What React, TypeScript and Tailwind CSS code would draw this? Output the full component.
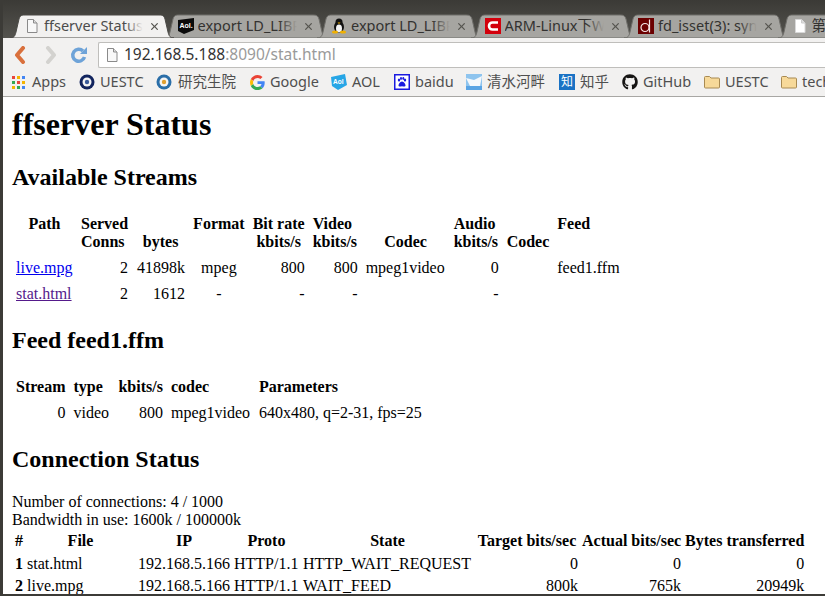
import React from "react";
import { FaGithub } from "react-icons/fa";
import { IoClose } from "react-icons/io5";

const uiFont = "font-['Noto_Sans','Noto_Sans_CJK_SC',sans-serif]";

function DocIcon({ active }: { active?: boolean }) {
  return (
    <svg width="16" height="16" viewBox="0 0 16 16" className="shrink-0">
      <path
        d="M3.5 1.5h6l3.5 3.5v9.5h-9.5z"
        fill={active ? "#f8f8f8" : "#fff"}
        stroke={active ? "#8a8a8a" : "#d8d8d8"}
      />
      <path d="M9.5 1.5v3.5h3.5" fill="#ddd" stroke={active ? "#8a8a8a" : "#ccc"} />
    </svg>
  );
}

function AolIcon() {
  return (
    <svg width="16" height="16" viewBox="0 0 16 16" className="shrink-0">
      <path d="M0 2l16-2v12l-10 4-6-3z" fill="#0b0b0b" />
      <text x="1.5" y="10" fontSize="7" fontWeight="700" fill="#fff" fontFamily="Liberation Sans">
        Aol.
      </text>
    </svg>
  );
}

function TuxIcon() {
  return (
    <svg width="16" height="16" viewBox="0 0 16 16" className="shrink-0">
      <ellipse cx="8" cy="9" rx="5" ry="6" fill="#111" />
      <circle cx="8" cy="4" r="3.5" fill="#111" />
      <ellipse cx="8" cy="10.5" rx="3" ry="4" fill="#f4f4f4" />
      <path d="M6.5 4.5h3l-1.5 1.5z" fill="#f0b000" />
      <ellipse cx="4" cy="14" rx="3" ry="1.6" fill="#f0b000" />
      <ellipse cx="12" cy="14" rx="3" ry="1.6" fill="#f0b000" />
    </svg>
  );
}

function RedCIcon() {
  return (
    <svg width="16" height="16" viewBox="0 0 16 16" className="shrink-0">
      <rect width="16" height="16" fill="#d3000c" />
      <path d="M13 4.5H7.5a3.5 3.5 0 0 0 0 7H13" fill="none" stroke="#fff" strokeWidth="2.6" />
    </svg>
  );
}

function DieIcon() {
  return (
    <svg width="16" height="16" viewBox="0 0 16 16" className="shrink-0">
      <rect width="16" height="16" fill="#6b0000" />
      <circle cx="7" cy="9.5" r="4" fill="none" stroke="#f5e6e6" strokeWidth="1.2" />
      <path d="M11.5 1.5v13" stroke="#f5e6e6" strokeWidth="1.2" />
    </svg>
  );
}

const tabs = [
  { title: "ffserver Status", icon: <DocIcon active />, active: true },
  { title: "export LD_LIBRARY", icon: <AolIcon /> },
  { title: "export LD_LIBRARY", icon: <TuxIcon /> },
  { title: "ARM-Linux下Wifi", icon: <RedCIcon /> },
  { title: "fd_isset(3): sync", icon: <DieIcon /> },
  { title: "第一章", icon: <DocIcon /> },
];

function Tab({ title, icon, active }: { title: string; icon: React.ReactNode; active?: boolean }) {
  return (
    <div className={`relative flex h-[24px] w-[153.5px] shrink-0 items-center pl-[7px] ${active ? "z-10" : ""}`}>
      <svg width="172" height="24" viewBox="0 0 172 24" className="absolute -left-[7px] top-0">
        <path
          d="M0 24c4 0 5-2 6-6l3-13c1-3 2-4 6-4h134c4 0 5 1 6 4l3 13c1 4 2 6 6 6z"
          fill={active ? "#f2f1f0" : "#a6a5a1"}
          stroke={active ? "#4a4945" : "#6f6e6a"}
          strokeWidth="1"
        />
      </svg>
      <div className="relative">{icon}</div>
      <div className={`relative mb-[2px] ml-[4px] w-[99px] overflow-hidden whitespace-nowrap text-[14.5px] leading-[18px] ${active ? "text-[#4c4c4c]" : "text-[#333230]"}`}>
        {title}
        <div className={`absolute inset-y-0 right-0 w-[18px] bg-gradient-to-r from-transparent ${active ? "to-[#f2f1f0]" : "to-[#a6a5a1]"}`} />
      </div>
      <IoClose className="relative ml-[5px] shrink-0 text-[#55544f]" size={13} />
    </div>
  );
}

function AppsIcon() {
  const colors = ["#e8453c", "#f4b400", "#4285f4", "#34a853", "#e8453c", "#f4b400", "#f4b400", "#34a853", "#4285f4"];
  return (
    <svg width="13" height="13" viewBox="0 0 13 13" className="shrink-0">
      {colors.map((c, i) => (
        <rect key={i} x={(i % 3) * 5} y={Math.floor(i / 3) * 5} width="3" height="3" fill={c} />
      ))}
    </svg>
  );
}

function SealIcon({ light }: { light?: boolean }) {
  return (
    <svg width="16" height="16" viewBox="0 0 16 16" className="shrink-0">
      <circle cx="8" cy="8" r="7.5" fill={light ? "#2a6ea8" : "#12245e"} />
      <circle cx="8" cy="8" r="4.5" fill="#f4f4f4" />
      <circle cx="8" cy="8" r="2.2" fill={light ? "#e0a030" : "#3a5a9a"} />
    </svg>
  );
}

function GoogleIcon() {
  return (
    <svg width="15" height="15" viewBox="0 0 48 48" className="shrink-0">
      <path fill="#EA4335" d="M24 9.5c3.5 0 6.700 1.200 9.200 3.600l6.900-6.900C35.900 2.400 30.500 0 24 0 14.600 0 6.500 5.400 2.600 13.200l8 6.200C12.500 13.700 17.800 9.500 24 9.500z" />
      <path fill="#4285F4" d="M47 24.500c0-1.600-.1-3.100-.4-4.500H24v9h12.900c-.6 3-2.200 5.500-4.700 7.200l7.700 6C44.400 38.100 47 31.900 47 24.500z" />
      <path fill="#FBBC05" d="M10.500 28.600c-.5-1.400-.8-3-.8-4.600s.3-3.200.8-4.600l-8-6.200C.9 16.500 0 20.100 0 24s.9 7.500 2.600 10.800z" />
      <path fill="#34A853" d="M24 48c6.500 0 11.900-2.100 15.900-5.800l-7.700-6c-2.200 1.500-4.900 2.300-8.200 2.300-6.300 0-11.500-4.200-13.400-9.900l-8 6.200C6.500 42.600 14.600 48 24 48z" />
    </svg>
  );
}

function AolBlueIcon() {
  return (
    <svg width="16" height="16" viewBox="0 0 16 16" className="shrink-0">
      <path d="M0 3l14-3 2 11-9 5-6-4z" fill="#27a6e6" />
      <text x="2" y="10" fontSize="6.5" fontWeight="700" fill="#fff" fontFamily="Liberation Sans">
        Aol
      </text>
    </svg>
  );
}

function PawIcon() {
  return (
    <svg width="16" height="16" viewBox="0 0 16 16" className="shrink-0">
      <rect x="0.75" y="0.75" width="14.5" height="14.500" fill="#fff" stroke="#1a1ae0" strokeWidth="1.500" />
      <g fill="#1a1ae0">
        <ellipse cx="5" cy="6" rx="1.200" ry="1.600" />
        <ellipse cx="11" cy="6" rx="1.200" ry="1.600" />
        <ellipse cx="7" cy="4.500" rx="1" ry="1.400" />
        <ellipse cx="9.300" cy="4.500" rx="1" ry="1.400" />
        <path d="M8 7.500c2 0 3.500 2.500 3.500 4 0 1-1 1.200-3.500.8-2.500.4-3.500.2-3.500-.8 0-1.500 1.500-4 3.500-4z" />
      </g>
    </svg>
  );
}

function ShipIcon() {
  return (
    <svg width="16" height="16" viewBox="0 0 16 16" className="shrink-0">
      <rect width="16" height="16" fill="#8ec4ee" />
      <path d="M0 4l8 2 8-4-2 10H4z" fill="#f4f8fc" />
      <path d="M0 12h16v4H0z" fill="#5aa4e4" />
    </svg>
  );
}

function ZhihuIcon() {
  return (
    <div className="flex h-[16px] w-[16px] shrink-0 items-center justify-center bg-[#1a72c4] text-[12px] leading-none text-white">
      知
    </div>
  );
}

function FolderIcon() {
  return (
    <svg width="16" height="14" viewBox="0 0 16 14" className="shrink-0">
      <path
        d="M.5 2.500a1 1 0 0 1 1-1h4l1.500 1.500h7.500a1 1 0 0 1 1 1v8a1 1 0 0 1-1 1h-13a1 1 0 0 1-1-1z"
        fill="#f7d999"
        stroke="#a88a52"
      />
    </svg>
  );
}

const bookmarks = [
  { label: "Apps", icon: <AppsIcon />, width: "w-[35px]", gap: "gap-[7px]" },
  { label: "UESTC", icon: <SealIcon />, width: "w-[44px]", gap: "gap-[5px]" },
  { label: "研究生院", icon: <SealIcon light />, width: "w-[60px]", gap: "gap-[6px]" },
  { label: "Google", icon: <GoogleIcon />, width: "w-[49px]", gap: "gap-[5px]" },
  { label: "AOL", icon: <AolBlueIcon />, width: "w-[30px]", gap: "gap-[5px]" },
  { label: "baidu", icon: <PawIcon />, width: "w-[39px]", gap: "gap-[5px]" },
  { label: "清水河畔", icon: <ShipIcon />, width: "w-[60px]", gap: "gap-[5px]" },
  { label: "知乎", icon: <ZhihuIcon />, width: "w-[30px]", gap: "gap-[5px]" },
  { label: "GitHub", icon: <FaGithub size={16} className="shrink-0 text-[#161514]" />, width: "w-[49px]", gap: "gap-[5px]" },
  { label: "UESTC", icon: <FolderIcon />, width: "w-[44px]", gap: "gap-[5px]" },
  { label: "tech", icon: <FolderIcon />, width: "w-[30px]", gap: "gap-[5px]" },
];

function Toolbar() {
  return (
    <div className="flex h-[29px] shrink-0 items-end bg-[#f2f1f0] pl-[9px]">
      <div className="flex h-[25px] w-[86px] shrink-0 items-center self-center pt-[3px]">
        <svg width="16" height="18" viewBox="0 0 16 18" className="shrink-0">
          <path d="M11 2L5 9l6 7" fill="none" stroke="#d9703c" strokeWidth="4" strokeLinejoin="round" strokeLinecap="round" />
        </svg>
        <svg width="16" height="18" viewBox="0 0 16 18" className="ml-[15px] shrink-0">
          <path d="M5 2l6 7-6 7" fill="none" stroke="#d3d2cf" strokeWidth="4" strokeLinejoin="round" strokeLinecap="round" />
        </svg>
        <svg width="18" height="18" viewBox="0 0 18 18" className="ml-[11px] shrink-0">
          <path d="M14.500 11a6 6 0 1 1-1.500-6" fill="none" stroke="#6ea3d8" strokeWidth="3.500" />
          <path d="M17 1v7h-7z" fill="#6ea3d8" />
        </svg>
      </div>
      <div className="flex h-[26px] flex-1 items-center rounded-tl-[2px] rounded-bl-[2px] border border-r-0 border-[#bfbebb] bg-white pl-[5px]">
        <DocIcon active />
        <span className={`ml-[4px] text-[15.5px] leading-none text-[#333] ${uiFont}`}>
          192.168.5.188<span className="text-[#9a9a9a]">:8090/stat.html</span>
        </span>
      </div>
    </div>
  );
}

function Bookmarks() {
  return (
    <div className={`flex h-[29px] shrink-0 items-center gap-[12px] overflow-hidden whitespace-nowrap border-b border-[#a8a7a4] bg-[#f2f1f0] pl-[9px] text-[14.5px] text-[#4f4f4f] ${uiFont}`}>
      {bookmarks.map((b, i) => (
        <div key={i} className={`flex shrink-0 items-center ${b.gap}`}>
          {b.icon}
          <span className={b.width}>{b.label}</span>
        </div>
      ))}
    </div>
  );
}

export default function App() {
  return (
    <div className="flex h-[596px] w-[825px] flex-col overflow-hidden border-b-2 border-l-[3px] border-[#3c3b37] bg-white">
      <div className={`flex h-[38px] shrink-0 items-end overflow-hidden bg-gradient-to-b from-[#3b3a36] to-[#54534e] pl-[14px] ${uiFont}`}>
        {tabs.map((t, i) => (
          <Tab key={i} {...t} />
        ))}
      </div>
      <div className="h-[1px] shrink-0 bg-[#f2f1f0]" />
      <Toolbar />
      <Bookmarks />

      <div className="flex-1 overflow-hidden pl-[9px] font-['Liberation_Serif',serif] text-[16px] leading-[18px] text-black">
        <h1 className="mt-[9px] text-[32px] font-bold leading-[37px]">ffserver Status</h1>
        <h2 className="mt-[21px] mb-[20px] text-[24px] font-bold leading-[27px]">Available Streams</h2>
        <table>
          <thead>
            <tr className="[&>th]:px-1 [&>th]:py-1 [&>th]:align-top">
              <th className="w-[65px] text-center">Path</th>
              <th className="text-left">Served<br />Conns</th>
              <th className="w-[57px] text-center"><br />bytes</th>
              <th className="text-center">Format</th>
              <th className="text-center">Bit rate<br />kbits/s</th>
              <th className="w-[53px] text-left">Video<br />kbits/s</th>
              <th className="w-[88px] text-center"><br />Codec</th>
              <th className="w-[53px] text-left">Audio<br />kbits/s</th>
              <th className="text-center"><br />Codec</th>
              <th className="text-left">Feed</th>
            </tr>
          </thead>
          <tbody className="[&_td]:px-1 [&_td]:py-1">
            <tr>
              <td><a href="#" className="text-[#0000ee] underline">live.mpg</a></td>
              <td className="text-right">2</td>
              <td className="text-right">41898k</td>
              <td className="text-center">mpeg</td>
              <td className="text-right">800</td>
              <td className="text-right">800</td>
              <td>mpeg1video</td>
              <td className="text-right">0</td>
              <td></td>
              <td>feed1.ffm</td>
            </tr>
            <tr>
              <td><a href="#" className="text-[#551a8b] underline">stat.html</a></td>
              <td className="text-right">2</td>
              <td className="text-right">1612</td>
              <td className="text-center">-</td>
              <td className="text-right">-</td>
              <td className="text-right">-</td>
              <td></td>
              <td className="text-right">-</td>
              <td></td>
              <td></td>
            </tr>
          </tbody>
        </table>

        <h2 className="mt-[20px] mb-[20px] text-[24px] font-bold leading-[27px]">Feed feed1.ffm</h2>
        <table>
          <thead>
            <tr className="[&>th]:px-1 [&>th]:py-1 [&>th]:text-left">
              <th>Stream</th>
              <th className="w-[45px]">type</th>
              <th>kbits/s</th>
              <th className="w-[88px]">codec</th>
              <th>Parameters</th>
            </tr>
          </thead>
          <tbody className="[&_td]:px-1 [&_td]:py-1">
            <tr>
              <td className="text-right">0</td>
              <td>video</td>
              <td className="text-right">800</td>
              <td>mpeg1video</td>
              <td>640x480, q=2-31, fps=25</td>
            </tr>
          </tbody>
        </table>

        <h2 className="mt-[20px] mb-[20px] text-[24px] font-bold leading-[27px]">Connection Status</h2>
        <p>Number of connections: 4 / 1000</p>
        <p>Bandwidth in use: 1600k / 100000k</p>
        <table className="border-separate border-spacing-[2px] whitespace-nowrap">
          <thead>
            <tr className="[&>th]:px-px [&>th]:pt-px [&>th]:pb-[2px]">
              <th>#</th>
              <th className="w-[109px] text-center">File</th>
              <th className="w-[93px]">IP</th>
              <th className="w-[67px]">Proto</th>
              <th className="w-[171px]">State</th>
              <th className="w-[104px]">Target bits/sec</th>
              <th className="w-[101px]">Actual bits/sec</th>
              <th>Bytes transferred</th>
            </tr>
          </thead>
          <tbody className="[&_td]:p-px">
            <tr>
              <td className="font-bold">1</td>
              <td>stat.html</td>
              <td>192.168.5.166</td>
              <td>HTTP/1.1</td>
              <td>HTTP_WAIT_REQUEST</td>
              <td className="text-right">0</td>
              <td className="text-right">0</td>
              <td className="text-right">0</td>
            </tr>
            <tr>
              <td className="font-bold">2</td>
              <td>live.mpg</td>
              <td>192.168.5.166</td>
              <td>HTTP/1.1</td>
              <td>WAIT_FEED</td>
              <td className="text-right">800k</td>
              <td className="text-right">765k</td>
              <td className="text-right">20949k</td>
            </tr>
          </tbody>
        </table>
      </div>
    </div>
  );
}
